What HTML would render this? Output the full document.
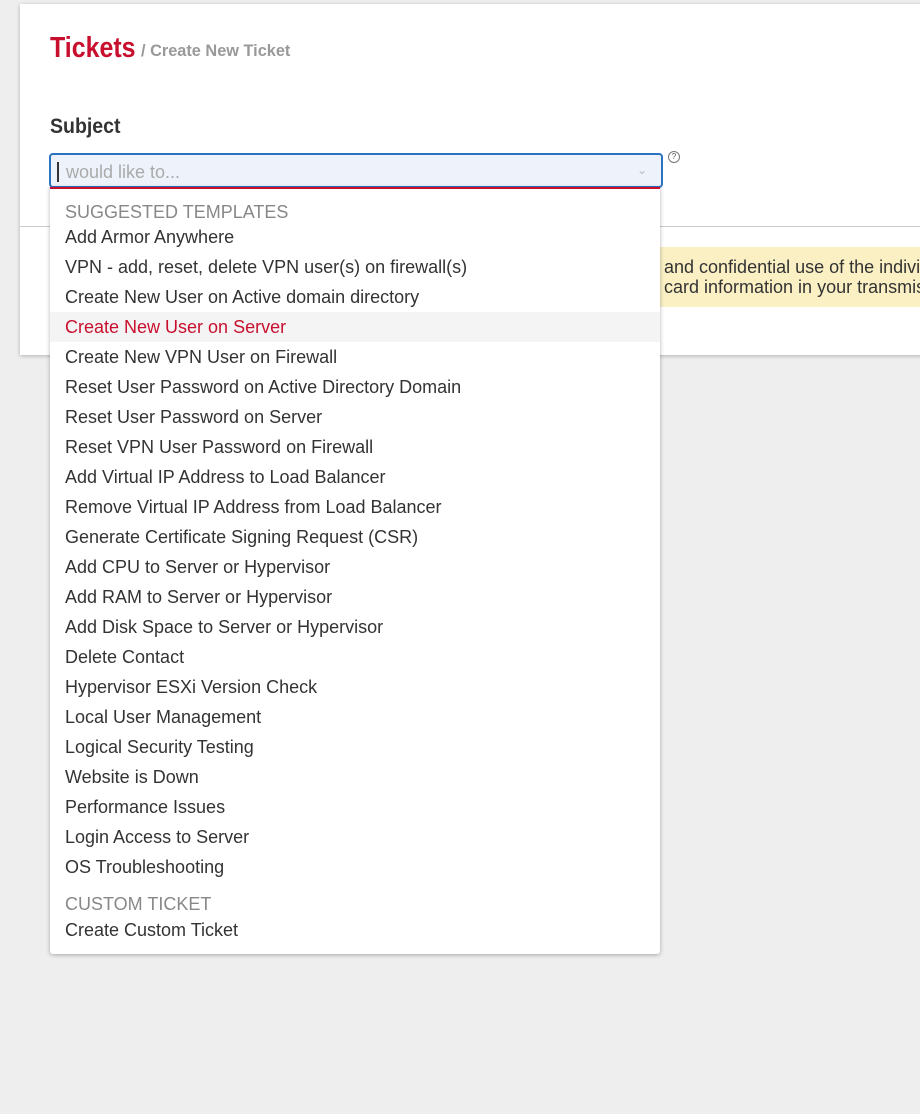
<!DOCTYPE html>
<html><head><meta charset="utf-8"><style>
html,body{margin:0;padding:0}
body{width:920px;height:1114px;background:#eeeeee;font-family:"Liberation Sans",Arial,sans-serif;position:relative;overflow:hidden}
.card{position:absolute;left:20px;top:4px;width:920px;height:351px;background:#fff;box-shadow:0 1px 4px rgba(0,0,0,.25)}
.t1{position:absolute;left:30px;top:28px;color:#c8102e;font-size:29px;font-weight:bold;transform:scaleX(.86);transform-origin:0 0;white-space:nowrap}
.t2{position:absolute;left:121px;top:37px;color:#999;font-size:17px;font-weight:bold;transform:scaleX(.96);transform-origin:0 0;white-space:nowrap}
.subj{position:absolute;left:30px;top:111px;font-weight:bold;font-size:21px;color:#333;transform:scaleX(.93);transform-origin:0 0}
.hr{position:absolute;left:0;top:222px;width:920px;height:1px;background:#ccc}
.note{position:absolute;left:560px;top:243px;width:360px;height:60px;background:#faf0c4;color:#333;font-size:18px;line-height:20px;padding-top:10px;box-sizing:border-box;white-space:nowrap;overflow:hidden}
.note div{position:relative;left:84px}
.input{position:absolute;left:49px;top:153px;width:614px;height:35px;box-sizing:border-box;border:2px solid #2a73c3;border-radius:4px;background:#eef3fb}
.input .ph{position:absolute;left:15px;top:7px;font-size:18px;color:#aaa}
.input .cur{position:absolute;left:6px;top:7px;width:2px;height:20px;background:#333}
.input .chev{position:absolute;right:14px;top:8px;color:#bbb;font-size:12px}
.q{position:absolute;left:668px;top:151px;width:10px;height:10px;border:1px solid #777;border-radius:50%;font-size:8px;line-height:10px;text-align:center;color:#555}
.dd{position:absolute;left:50px;top:187px;width:610px;height:767px;background:#fff;border-top:2px solid #c8102e;box-sizing:border-box;box-shadow:0 1px 4px rgba(0,0,0,.3);border-radius:0 0 3px 3px}
.dd .h{position:absolute;left:15px;font-size:18px;color:#888}
.dd .it{position:absolute;left:0;width:610px;height:30px;line-height:30px;padding-left:15px;box-sizing:border-box;font-size:18px;color:#333}
.dd .sel{background:#f4f4f4;color:#c8102e}
</style></head><body>
<div class="card">
<div class="t1">Tickets</div><div class="t2">/ Create New Ticket</div>
<div class="subj">Subject</div>
<div class="hr"></div>
<div class="note"><div>and confidential use of the individual<br>card information in your transmission</div></div>
</div>
<div class="input"><div class="cur"></div><div class="ph">would like to...</div><div class="chev">&#8964;</div></div>
<div class="q">?</div>
<div class="dd">
<div class="h" style="top:13px">SUGGESTED TEMPLATES</div>
<div class="it" style="top:33px">Add Armor Anywhere</div>
<div class="it" style="top:63px">VPN - add, reset, delete VPN user(s) on firewall(s)</div>
<div class="it" style="top:93px">Create New User on Active domain directory</div>
<div class="it sel" style="top:123px">Create New User on Server</div>
<div class="it" style="top:153px">Create New VPN User on Firewall</div>
<div class="it" style="top:183px">Reset User Password on Active Directory Domain</div>
<div class="it" style="top:213px">Reset User Password on Server</div>
<div class="it" style="top:243px">Reset VPN User Password on Firewall</div>
<div class="it" style="top:273px">Add Virtual IP Address to Load Balancer</div>
<div class="it" style="top:303px">Remove Virtual IP Address from Load Balancer</div>
<div class="it" style="top:333px">Generate Certificate Signing Request (CSR)</div>
<div class="it" style="top:363px">Add CPU to Server or Hypervisor</div>
<div class="it" style="top:393px">Add RAM to Server or Hypervisor</div>
<div class="it" style="top:423px">Add Disk Space to Server or Hypervisor</div>
<div class="it" style="top:453px">Delete Contact</div>
<div class="it" style="top:483px">Hypervisor ESXi Version Check</div>
<div class="it" style="top:513px">Local User Management</div>
<div class="it" style="top:543px">Logical Security Testing</div>
<div class="it" style="top:573px">Website is Down</div>
<div class="it" style="top:603px">Performance Issues</div>
<div class="it" style="top:633px">Login Access to Server</div>
<div class="it" style="top:663px">OS Troubleshooting</div>
<div class="h" style="top:705px">CUSTOM TICKET</div>
<div class="it" style="top:726px">Create Custom Ticket</div>
</div>
</body></html>
